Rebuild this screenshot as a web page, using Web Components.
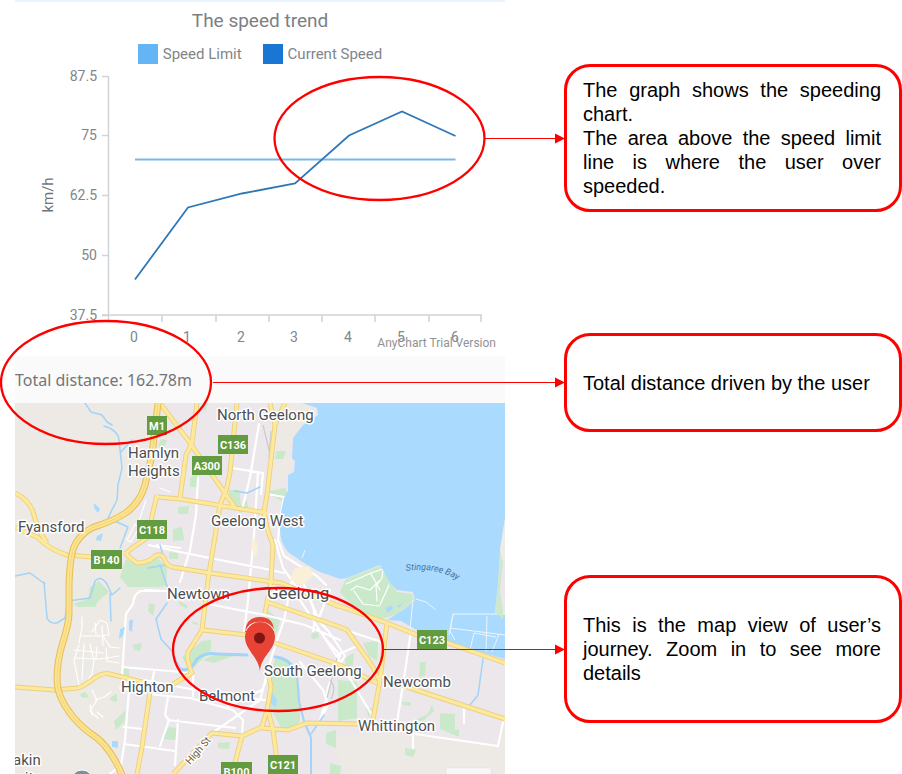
<!DOCTYPE html>
<html lang="en">
<head>
<meta charset="utf-8">
<meta name="viewport" content="width=device-width, initial-scale=1">
<title>Trip summary guide</title>
<style>
body { margin: 0; background: #fff; font-family: Roboto, "Liberation Sans", sans-serif; }
</style>
</head>
<body>
<trip-guide>
  <phone-screen slot="screen">
    <speed-chart heading="The speed trend"></speed-chart>
    <trip-distance>Total distance: 162.78m</trip-distance>
    <trip-map></trip-map>
  </phone-screen>
  <guide-note slot="notes" class="tall"><p>The graph shows the speeding chart.</p><p>The area above the speed limit line is where the user over speeded.</p></guide-note>
  <guide-note slot="notes"><p>Total distance driven by the user</p></guide-note>
  <guide-note slot="notes" class="tall"><p>This is the map view of user’s journey. Zoom in to see more details</p></guide-note>
</trip-guide>
<script>
const define = (name, html) => customElements.define(name, class extends HTMLElement {
  constructor() {
    super();
    this.attachShadow({ mode: 'open' }).innerHTML = html;
  }
});

define('trip-guide', `
<style>
  :host { display: grid; position: relative; box-sizing: border-box; padding-left: 15px;
    grid-template-columns: minmax(0, 490fr) minmax(0, 338fr); column-gap: 59px; overflow: hidden; }
  .notes { display: flex; flex-direction: column; padding-top: 64px; }
  .marks { position: absolute; inset: 0 0 auto 0; width: 100%; height: auto; pointer-events: none; }
</style>
<slot name="screen"></slot>
<div class="notes"><slot name="notes"></slot></div>
<svg class="marks" viewBox="0 0 902 774" fill="none" stroke="#f00" aria-hidden="true">
  <g stroke-width="2.3">
    <ellipse cx="379.5" cy="138.5" rx="105" ry="61.5"/>
    <ellipse cx="106" cy="382.5" rx="105" ry="61.5"/>
    <ellipse cx="278" cy="649.5" rx="105" ry="61.5"/>
  </g>
  <path d="M485 138.500H556M213 382.500H556M383 649.500H556"/>
  <path fill="#f00" stroke="none" d="M555 133.500l10 5-10 5zM555 377.500l10 5-10 5zM555 644.500l10 5-10 5z"/>
</svg>`);

define('guide-note', `
<style>
  :host { display: flex; flex-direction: column; justify-content: center; box-sizing: border-box;
    min-height: 99px; padding: 11px 18px 11px 16px; border: 3px solid #f00; border-radius: 26px;
    font: 20px/24px "Liberation Sans", Arial, sans-serif; color: #000; text-align: justify; }
  :host(.tall) { min-height: 148px; }
  :host(:not(:first-of-type)) { margin-top: 121px; }
  :host(:last-of-type) { margin-top: 143px; }
  ::slotted(p) { margin: 0; }
</style>
<slot></slot>`);

define('phone-screen', `
<style>:host { display: flex; flex-direction: column; min-width: 0; }</style>
<slot></slot>`);

define('trip-distance', `
<style>
  :host { display: flex; align-items: center; min-height: 47px; background: #fafafa; color: #757575;
    font: 16px/24px "Noto Sans", sans-serif; }
</style>
<span><slot></slot></span>`);

customElements.define('speed-chart', class extends HTMLElement {
  constructor() {
    super();
    const xs = [134, 187, 241, 294, 348, 401, 455];
    const ys = [[76, '87.5'], [135, '75'], [195, '62.5'], [255, '50'], [315, '37.5']];
    this.attachShadow({ mode: 'open' }).innerHTML = `
<style>
  :host { display: block; border-top: 2px solid #e9f4fe; color: #80868b; }
  h2 { margin: 8px 0 0; font-size: 19px; line-height: 22px; font-weight: 400; text-align: center; color: #7c8084; }
  ul { display: flex; justify-content: center; gap: 21px; margin: 12px 0 0; padding: 0; list-style: none;
    font-size: 15px; line-height: 20px; }
  li { display: flex; align-items: center; gap: 5px; }
  i { width: 20px; height: 20px; background: #64b5f6; }
  .now { background: #1976d2; }
  svg { display: block; width: 100%; height: auto; font-size: 14px; }
</style>
<h2>${this.getAttribute('heading')}</h2>
<ul><li><i></i>Speed Limit</li><li><i class="now"></i>Current Speed</li></ul>
<svg viewBox="15 64 490 292" fill="#80868b" role="img" aria-label="Speed in km/h over the trip">
  <g stroke="#d0d4d6" stroke-width="1.5" fill="none">
    <path d="M108.500 76V322M102 315H482"/>
    <path d="${ys.map(([y]) => `M102 ${y + .5}h6`).join('')}${[162, 216, 269, 322, 375, 429, 481].map(x => `M${x} 315v7`).join('')}"/>
  </g>
  ${ys.map(([y, t]) => `<text x="97" y="${y + 5}" text-anchor="end">${t}</text>`).join('')}
  ${xs.map((x, i) => `<text x="${x}" y="342" text-anchor="middle">${i}</text>`).join('')}
  <text transform="translate(53 195) rotate(-90)" text-anchor="middle" font-size="15" fill="#6f7478">km/h</text>
  <text x="496" y="347" text-anchor="end" font-size="12" fill="#929292">AnyChart Trial Version</text>
  <g fill="none" stroke-width="1.800">
    <path stroke="#78b9e8" d="M135 159.500H455.500"/>
    <path stroke="#2f78b8" d="M135 279.500L188 207.500L242 193.500L295 183.500L349 135.500L402 111.500L455.500 136"/>
  </g>
</svg>`;
  }
});

customElements.define('trip-map', class extends HTMLElement {
  constructor() {
    super();
    const label = (x, y, t, s = 15) => `<text x="${x}" y="${y}" font-size="${s}">${t}</text>`;
    const shield = (x, y, w, t) => `<rect x="${x}" y="${y}" width="${w}" height="19" fill="#639b40"/>
      <text x="${x + w / 2}" y="${y + 14}" font-size="11" text-anchor="middle">${t}</text>`;
    const minor = `M157 495L153 512L147 538L132 548L125 554M157 497L180 499L267 513M125 553Q131 559 137 563Q148 563 155 556Q161 553 164 558Q166 565 172 567L210 573L281 583L340 607
      M15 493Q29 500 33 512Q38 531 47 543M15 527L37 537Q50 550 67 555L92 557H122
      M160 403L190 443L236 509M197 403L192 443L186 455L180 498M237 403L230 472L227 487L220 505L208 580L202 630L188 652Q186 659 192 673L175 683L166 688
      M270 403L275 425M285 403L275 425L267 495L264 512L267 528L273 545L271 582L265 613M267 602L340 627L347 630L373 667L379 680
      M203 630L247 635M275 643L340 665L377 683M320 599L387 623L417 635L448 643L505 663M387 623L380 680L373 720
      M379 675L410 688L505 719M268 673L271 687L267 710L262 727L242 736L212 733L173 774M242 736L232 774M268 710L273 730L277 760M262 728L288 730L307 723L358 724
      M15 687L55 690L78 688Q84 686 92 680Q102 672 110 674L143 682M150 692L142 747L137 774M173 774L180 767`;
    const major = `M158 403L152 455L145 485Q140 502 127 512Q117 519 100 525Q84 529 76 543Q70 552 69 585L69 613Q69 623 63 642Q57 660 57 680Q57 696 70 713Q77 723 90 733Q110 745 122 775`;
    this.attachShadow({ mode: 'open' }).innerHTML = `
<style>
  :host { display: block; }
  svg { display: block; width: 100%; height: auto; }
  .names { fill: #4b4f53; stroke: #fff; stroke-width: 3px; stroke-linejoin: round; paint-order: stroke; }
  .shields { fill: #fff; font-weight: 700; }
</style>
<svg viewBox="15 403 490 371" role="img" aria-label="Map of Geelong with the trip marked">
  <path fill="#ece7ea" d="M15 403H505V774H15z"/>
  <path fill="#edeae5" d="M15 403H158L152 455L145 485L137 500L139 526L128 545L125 590L150 578L137 600L126 612L120 680L124 715L117 765L120 774H15z"/>
  <path fill="#edeae5" d="M330 736L414 733L498 746L503 721L505 720V774H345zM270 403H318L304 426L293 438L292 470L268 495z"/>
  <g fill="#cae8ca">
    <path d="M126 559L137 564L157 557L167 568L166 586L160 587H128L120 577z"/>
    <path d="M346 579L380 566L391 584L397 592L412 594L414 600L397 614L379 620L357 610L340 592z"/>
    <path d="M73 604L88 599L90 587L99 581L109 592L99 600L95 607L78 607zM202 641L211 640L211 651L190 671L182 657zM237 655L213 663L203 660L213 655zM275 659Q289 655 293 667L300 690L300 721L291 730L281 727L270 708L271 675z"/>
    <path d="M363 643L378 641L377 661L369 656zM345 658L354 653L353 665L346 667zM338 680L357 682L357 718L338 721zM372 708L369 718L366 708zM228 490L239 490L241 505L247 500L248 508L240 513L234 506zM190 478L197 473L197 487L190 487zM276 451L286 451L283 459H275zM270 491L285 488L288 493L284 502L270 495zM178 507L189 506L188 514H178zM173 529L182 527L184 540L173 541zM169 552L178 553L178 559L169 559zM265 608L280 620L278 630L271 640L267 620z"/>
    <path d="M420 662L426 662L425 676L419 677zM440 713L455 714L455 730L459 730L459 737L440 729zM402 702L411 702L410 706L403 705zM432 705L434 711L423 721L415 720L428 714zM405 748L416 750L413 757L405 755zM326 733L336 730V748L326 744zM330 763L341 766L340 774H330zM114 721L126 710L124 722L116 730zM162 739L169 727L177 728L176 740zM122 667H129V676L122 674zM111 697L117 694L117 702L110 700zM80 694L85 692L89 697L82 698zM132 645L142 643L140 651L135 650zM149 603L155 605L153 616L148 611z"/>
    <path d="M218 743L230 742L229 749L218 748zM192 621L201 625L193 624zM311 634L318 632L319 638L312 639zM179 601L187 605L187 609L179 604zM202 403H208L205 412zM161 439L167 440L163 450L158 447z"/>
  </g>
  <g fill="none" stroke="#fff" stroke-linecap="round" stroke-linejoin="round" stroke-width="2.200">
    <path d="M259 424L250 477L242 510M232 468L263 473L261 494M267 494L284 497L280 520L278 540L284 556L300 566L317 576L326 585M198 478L196 515L190 550L180 582M149 545L180 552L266 569L284 573M157 545L180 548M275 540L283 568L300 592M258 473L254 535L248 600L244 633M250 510L265 514M203 603L265 615L305 625L340 640M145 590L165 591M292 580L284 620L272 655L260 700L215 731M167 591H141Q134 593 133 604L126 614L122 677L129 690L125 740L121 765L110 774M122 667L193 673M128 677L170 685L225 696L266 700M120 688L157 695L190 698L233 710L243 720L242 736M154 672L150 692M193 673V696M124 727L143 729M124 744L175 751M168 697L165 715L169 720L160 746M168 720L235 728M178 720L175 765M228 706L262 690L270 672M330 590L318 620L329 632L345 656L338 667M304 585L318 618M300 600L337 657L378 725M345 630L382 642M411 631L406 665L397 723M324 637L340 655L328 688L326 700L320 720M337 655L357 646M300 662L323 690L328 705L320 720M408 733L498 746L504 718M464 708V723M413 733V748M310 600Q317 612 313 631"/>
    <path stroke-width="1.200" d="M82 617V627L79 643M82 636H103L110 647L119 648M76 658L100 659L119 656M79 645L74 660L79 685M84 644L82 679M90 644L94 661L92 674L87 682M92 632L100 620L107 623L109 635L95 636M95 623L96 634M102 626L103 645M97 647L96 658M106 648L107 661L119 663M74 650L103 653M92 690L97 700L90 711L98 718M95 700L104 697L111 692M97 712L103 717M92 715L90 705M127 540L135 524L139 528L131 542L127 540M138 524L146 500M346 584L371 573L383 569M383 569L382 578L376 586L377 601M351 590L357 586L370 590L379 581M354 591L363 604L379 606M389 585L380 605M371 574L380 590M160 488L170 492"/>
  </g>
  <g fill="#abdaff">
    <path d="M302 403H505V518L500 552L498 585L495 613L505 615V659L477 651L448 642L420 632L401 621L387 620L403 610L415 600L413 592L397 590L390 583L380 565L347 578L340 579L320 572L307 565L288 552Q280 542 280 530L281 512L284 498L288 491L288 475L294 472L295 461L292 458L293 438L303 425L318 415L317 408z"/>
    <path d="M120 629L125 627L123 636L119 639zM129 621L133 619L132 632L129 630zM94 503L100 509L98 513L94 508zM97 536L103 533L101 541L96 540zM112 741H118V748L112 747zM271 691L277 700L276 707L271 704z"/>
    <path d="M386 608L392 605L393 609L387 613zM397 606L403 603L399 608z"/>
  </g>
  <g fill="none" stroke="#a2d3f8" stroke-width="1.500" stroke-linecap="round" stroke-linejoin="round">
    <path d="M44 582L47 618Q50 624 57 623L65 618L68 601L90 598L95 581Q101 575 107 584L112 595L120 588M110 594L111 621M15 576L30 573L45 584M167 603L156 619L161 639L171 650L180 668"/>
    <path stroke-width="3" d="M180 669Q190 673 197 659Q205 652 218 654L247 655M275 657Q290 658 297 674"/>
    <path stroke-width="2" d="M297 674L299 701L304 721L311 738L311 774"/>
    <path d="M85 403L91 412L102 415L107 422L112 425M104 426Q118 430 119 440L122 468L118 485L117 500L108 518M120 453L132 440M108 518L128 527L120 548M160 565L168 589M235 491L247 493L260 487M311 734L324 715M483 659L478 695L470 705M148 568L166 565M160 545L164 558"/>
  </g>
  <g fill="none" stroke="#eef5fa" stroke-width="1">
    <path d="M302 558L305 550M416 599L426 602L436 610M449 635L453 614H505M453 614L450 631L455 640M487 616L486 652M450 628L505 635M470 650L474 633L496 637M492 652L499 634M413 600L410 629"/>
  </g>
  <path fill="#efebe5" d="M505 519L500 549L502 562L505 558z"/><path fill="#cde8cf" d="M500 552L498 585L495 612L503 619V610L500 590L503 562z"/>
  <path fill="#faf0d8" d="M295 568L309 566L313 575L302 586L290 580zM254 537L258 545L256 559L251 547z"/>
  <g fill="none" stroke="#c8cbd0" stroke-width="1.200"><path d="M263 425L270 454M271 431L269 458M337 658L327 698M330 680Q337 688 331 699"/></g>
  <g fill="none" stroke-linejoin="round">
    <path stroke="#eccf80" stroke-width="5" d="${minor}"/>
    <path stroke="#fde99c" stroke-width="3.200" d="${minor}"/>
    <path stroke="#e6bf60" stroke-width="7" d="${major}"/>
    <path stroke="#fde48c" stroke-width="4.800" d="${major}"/>
    <path stroke="#eed07c" stroke-width=".8" d="${major}"/>
  </g>
  <g class="names">
    ${label(217, 420, 'North Geelong')}
    ${label(128, 458, 'Hamlyn')}
    ${label(128, 476, 'Heights')}
    ${label(18, 532, 'Fyansford')}
    ${label(211, 526, 'Geelong West')}
    ${label(167, 599, 'Newtown')}
    ${label(267, 599, 'Geelong', 17)}
    ${label(264, 676, 'South Geelong')}
    ${label(121, 692, 'Highton')}
    ${label(199, 701, 'Belmont')}
    ${label(383, 687, 'Newcomb')}
    ${label(358, 731, 'Whittington')}
    ${label(13, 765, 'akin')}
    ${label(12, 783, 'rsity')}
    <text transform="translate(190 765) rotate(-49)" font-size="10" style="fill:#6d5b3d">High St</text>
  </g>
  <path id="bay" fill="none" d="M406 571Q438 566 462 583"/>
  <text font-size="9" font-style="italic" fill="#46749f"><textPath href="#bay">Stingaree Bay</textPath></text>
  <g class="shields">
    ${shield(147, 416, 20, 'M1')}
    ${shield(218, 435, 30, 'C136')}
    ${shield(192, 456, 30, 'A300')}
    ${shield(137, 520, 30, 'C118')}
    ${shield(91, 550, 31, 'B140')}
    ${shield(417, 630, 30, 'C123')}
    ${shield(268, 755, 30, 'C121')}
    ${shield(221, 762, 31, 'B100')}
  </g>
  <circle cx="82" cy="781" r="11" fill="#78909c" stroke="#fff"/>
  <rect x="446" y="768" width="45" height="12" rx="1" fill="#f7f7f7" stroke="#ddd" stroke-width=".5"/>
  <g fill="#e84435">
    <path d="M245 632Q246 617 260 617Q274 617 274 632z"/>
    <path stroke="#fff" stroke-width="1.500" d="M246 631Q250 622.500 260 622.500Q270 622.500 274 631"/>
    <path d="M245 637A14.500 14.500 0 0 1 275 637C275 650 261 656 260 671C258 656 245 650 245 637z"/>
    <circle cx="259.500" cy="638" r="5.500" fill="#801313"/>
  </g>
</svg>`;
  }
});
</script>
</body>
</html>
